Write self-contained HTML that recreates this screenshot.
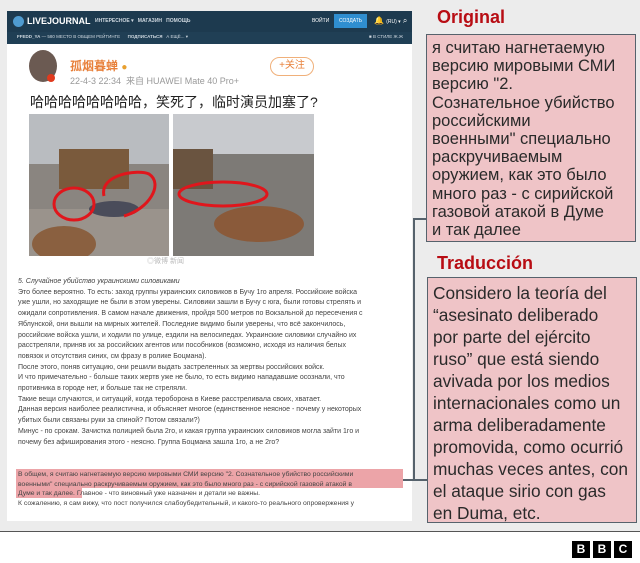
<!DOCTYPE html>
<html><head><meta charset="utf-8">
<style>
*{margin:0;padding:0;box-sizing:border-box}
body{width:640px;height:563px;background:#ececec;position:relative;overflow:hidden;font-family:"Liberation Sans","Noto Sans CJK SC",sans-serif}
.abs{position:absolute}
#panel{left:7px;top:11px;width:405px;height:510px;background:#fff;overflow:hidden}
.hdr1{left:0;top:0;width:405px;height:21px;background:#1d3a4f}
.hdr2{left:0;top:21px;width:405px;height:12px;background:#203f55}
.rt{font-family:"Liberation Sans",sans-serif;font-size:7px;color:#444;white-space:nowrap;line-height:10.7px}
.box{background:#efc4c7;border:1.5px solid #56626c;color:#2a2a2a;font-family:"Liberation Sans",sans-serif;white-space:nowrap;overflow:hidden}
.lbl{color:#b80d14;font-weight:bold;font-size:18px;font-family:"Liberation Sans",sans-serif}
</style></head><body>
<div id="panel" class="abs">
 <div class="abs hdr1"></div>
 <div class="abs hdr2"></div>
 <div class="abs" style="left:6px;top:5px;width:11px;height:11px;border-radius:50%;background:#4f9bd0"></div>
 <div class="abs" style="left:20px;top:5px;color:#fff;font-size:9px;font-weight:bold">LIVEJOURNAL</div>
 <div class="abs" style="left:88px;top:7px;color:#cfd8e0;font-size:5px;font-weight:bold;white-space:nowrap">ИНТЕРЕСНОЕ ▾ &nbsp; МАГАЗИН &nbsp; ПОМОЩЬ</div>
 <div class="abs" style="left:305px;top:7px;color:#fff;font-size:5px">ВОЙТИ</div>
 <div class="abs" style="left:327px;top:3px;width:33px;height:14px;background:#2f8ed0;color:#fff;font-size:5px;text-align:center;line-height:14px">СОЗДАТЬ</div>
 <div class="abs" style="left:367px;top:5px;color:#fff;font-size:8px;white-space:nowrap">🔔 <span style="font-size:5px">(RU) ▾</span> ⌕</div>
 <div class="abs" style="left:10px;top:23px;color:#cfd8e0;font-size:4.5px;white-space:nowrap"><b>FFEDD_YA</b> — 580 МЕСТО В ОБЩЕМ РЕЙТИНГЕ &nbsp;&nbsp;&nbsp;&nbsp; <b>ПОДПИСАТЬСЯ</b> &nbsp; А ЕЩЁ... ▾</div>
 <div class="abs" style="left:362px;top:23px;color:#cfd8e0;font-size:4.5px;white-space:nowrap">■ В СТИЛЕ Ж.Ж</div>
 <div class="abs" style="left:22px;top:39px;width:28px;height:32px;border-radius:50%;background:#6b5a52"></div>
 <div class="abs" style="left:40px;top:63px;width:8px;height:8px;border-radius:50%;background:#e03a1e"></div>
 <div class="abs" style="left:63px;top:46px;color:#e8803a;font-size:12px;font-weight:bold">孤烟暮蝉 <span style="color:#e8a030;font-size:10px">●</span></div>
 <div class="abs" style="left:63px;top:63px;color:#999;font-size:9px;white-space:nowrap">22-4-3 22:34 &nbsp;来自 HUAWEI Mate 40 Pro+</div>
 <div class="abs" style="left:263px;top:46px;width:44px;height:19px;border:1.5px solid #f0b07a;border-radius:10px;color:#e8803a;font-size:10px;text-align:center;line-height:16px">+关注</div>
 <div class="abs" style="left:23px;top:81px;color:#222;font-size:14px;white-space:nowrap">哈哈哈哈哈哈哈哈，笑死了，临时演员加塞了?</div>
 <svg class="abs" style="left:22px;top:103px" width="285" height="142">
  <rect x="0" y="0" width="140" height="142" fill="#8a8580"/>
  <rect x="0" y="0" width="140" height="50" fill="#b9bcc0"/>
  <rect x="30" y="35" width="70" height="40" fill="#7a5a3c"/>
  <rect x="0" y="95" width="140" height="47" fill="#9a938c"/>
  <ellipse cx="35" cy="130" rx="32" ry="18" fill="#8a6040"/>
  <ellipse cx="85" cy="95" rx="25" ry="8" fill="#4a4c5a"/>
  <path d="M75 82 C70 60,110 55,120 60 C135 70,120 95,95 102" stroke="#e0161c" stroke-width="3" fill="none"/>
  <ellipse cx="45" cy="90" rx="20" ry="16" stroke="#e0161c" stroke-width="3" fill="none"/>
  <rect x="144" y="0" width="141" height="142" fill="#7d7a76"/>
  <rect x="144" y="0" width="141" height="40" fill="#c8cace"/>
  <rect x="144" y="35" width="40" height="40" fill="#6a5440"/>
  <ellipse cx="230" cy="110" rx="45" ry="18" fill="#8a5a3a"/>
  <ellipse cx="194" cy="80" rx="44" ry="12" stroke="#e0161c" stroke-width="3" fill="none"/>
 </svg>
 <div class="abs" style="left:140px;top:245px;color:#bbb;font-size:7px">◎微博 新闻</div>
 <div class="abs rt" style="left:11px;top:266px">
  <i>5. Случайное убийство украинскими силовиками</i><br>
  Это более вероятно. То есть: заход группы украинских силовиков в Бучу 1го апреля. Российские войска<br>
  уже ушли, но заходящие не были в этом уверены. Силовики зашли в Бучу с юга, были готовы стрелять и<br>
  ожидали сопротивления. В самом начале движения, пройдя 500 метров по Вокзальной до пересечения с<br>
  Яблунской, они вышли на мирных жителей. Последние видимо были уверены, что всё закончилось,<br>
  российские войска ушли, и ходили по улице, ездили на велосипедах. Украинские силовики случайно их<br>
  расстреляли, приняв их за российских агентов или пособников (возможно, исходя из наличия белых<br>
  повязок и отсутствия синих, см фразу в ролике Боцмана).<br>
  После этого, поняв ситуацию, они решили выдать застреленных за жертвы российских войск.<br>
  И что примечательно - больше таких жертв уже не было, то есть видимо нападавшие осознали, что<br>
  противника в городе нет, и больше так не стреляли.<br>
  Такие вещи случаются, и ситуаций, когда теробор­она в Киеве расстреливала своих, хватает.<br>
  Данная версия наиболее реалистична, и объясняет многое (единственное неясное - почему у некоторых<br>
  убитых были связаны руки за спиной? Потом связали?)<br>
  Минус - по срокам. Зачистка полицией была 2го, и какая группа украинских силовиков могла зайти 1го и<br>
  почему без афиширования этого - неясно. Группа Боцмана зашла 1го, а не 2го?
 </div>
 <div class="abs" style="left:9px;top:458px;width:387px;height:19px;background:#eca4a8"></div>
 <div class="abs" style="left:9px;top:477px;width:66px;height:10px;background:#eca4a8"></div>
 <div class="abs rt" style="left:11px;top:459px;line-height:9.6px;font-size:6.8px">
  В общем, я считаю нагнетаемую версию мировыми СМИ версию "2. Сознательное убийство российскими<br>
  военными" специально раскручиваемым оружием, как это было много раз - с сирийской газовой атакой в<br>
  Думе и так далее. Главное - что виновный уже назначен и детали не важны.<br>
  К сожалению, я сам вижу, что пост получился слабоубедительный, и какого-то реального опровержения у
 </div>
</div>
<div class="abs" style="left:413px;top:218px;width:1.5px;height:262px;background:#56626c"></div>
<div class="abs" style="left:413px;top:218px;width:14px;height:1.5px;background:#56626c"></div>
<div class="abs" style="left:403px;top:479px;width:24px;height:1.5px;background:#56626c"></div>
<div class="abs lbl" style="left:437px;top:7px">Original</div>
<div class="abs box" style="left:426px;top:34px;width:210px;height:208px;padding:4px 5px;font-size:16.5px;line-height:18.2px">я считаю нагнетаемую<br>версию мировыми СМИ<br>версию "2.<br>Сознательное убийство<br>российскими<br>военными" специально<br>раскручиваемым<br>оружием, как это было<br>много раз - с сирийской<br>газовой атакой в Думе<br>и так далее</div>
<div class="abs lbl" style="left:437px;top:253px">Traducción</div>
<div class="abs box" style="left:427px;top:277px;width:210px;height:246px;padding:4px 5px;font-size:17.3px;line-height:22px">Considero la teoría del<br>“asesinato deliberado<br>por parte del ejército<br>ruso” que está siendo<br>avivada por los medios<br>internacionales como un<br>arma deliberadamente<br>promovida, como ocurrió<br>muchas veces antes, con<br>el ataque sirio con gas<br>en Duma, etc.</div>
<div class="abs" style="left:0;top:531px;width:640px;height:32px;background:#fff;border-top:1.5px solid #555"></div>
<div class="abs" style="left:572px;top:541px;display:flex;gap:3px">
 <div style="width:18px;height:17px;background:#000;color:#fff;font-weight:bold;font-size:12px;text-align:center;line-height:17px">B</div>
 <div style="width:18px;height:17px;background:#000;color:#fff;font-weight:bold;font-size:12px;text-align:center;line-height:17px">B</div>
 <div style="width:18px;height:17px;background:#000;color:#fff;font-weight:bold;font-size:12px;text-align:center;line-height:17px">C</div>
</div>
</body></html>
